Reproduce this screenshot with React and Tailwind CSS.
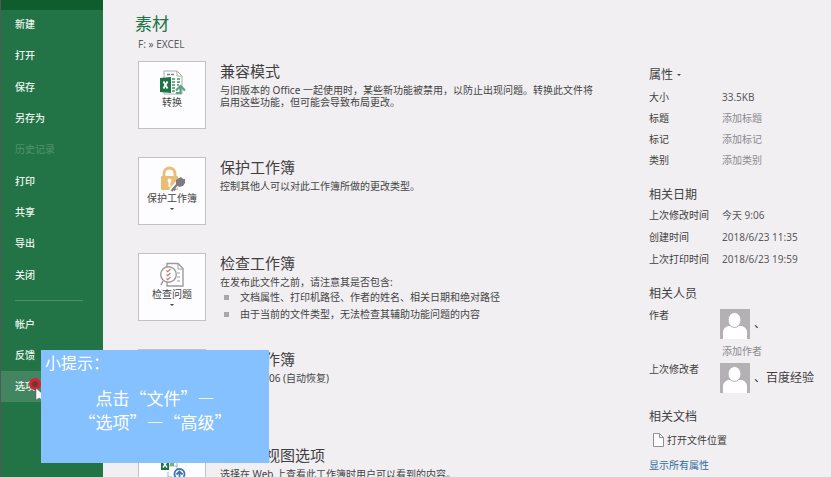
import React from 'react';

const menuItems = ['新建', '打开', '保存', '另存为', '历史记录', '打印', '共享', '导出', '关闭'];
const footerItems = ['帐户', '反馈', '选项'];

const ConvertIcon = () => (
  <svg className="w-[30px] h-[26px]" viewBox="0 0 30 26" fill="none" aria-hidden="true">
    <path d="M7 1h13l5 5v18H7z" fill="#fff" stroke="#a9aeac" />
    <path d="M20 1v5h5" stroke="#a9aeac" />
    <path d="M10 4.500h3M14 4.500h3" stroke="#7d8380" strokeWidth="1.400" />
    <path d="M15 9h3M20 9h3M15 12h3M20 12h3M15 15h3M20 15h2M15 18h3M15 21h3" stroke="#6fae8b" strokeWidth="2" />
    <path d="M3 8l11-1v16L3 22z" fill="#1e7446" />
    <path d="M6.500 11.500l4 7M10.500 11.500l-4 7" stroke="#fff" strokeWidth="1.800" />
    <path d="M20 24v-1h3.500v-6M19 20.500l4.500-4.500 4.500 4.500" stroke="#5d9f87" strokeWidth="2.200" />
  </svg>
);

const LockIcon = () => (
  <svg className="w-[30px] h-[26px]" viewBox="0 0 30 26" fill="none" aria-hidden="true">
    <path d="M7 12V7.500a5.500 5.500 0 0 1 11 0V12" stroke="#e9bd73" strokeWidth="2.800" />
    <rect x="4" y="10" width="17" height="14" rx="1" fill="#e9bd73" />
    <path d="M12.500 12.500a2 2 0 0 1 1 3.700V21h-2v-4.800a2 2 0 0 1 1-3.700z" fill="#fff" />
    <path d="M14 25l7-8" stroke="#fff" strokeWidth="5" />
    <path d="M14.500 25l7-8M17 23l1.500 1" stroke="#7d7b80" strokeWidth="2.200" />
    <path d="M19 14l3-2 2-1 2 2h2v4l-2 3-4 1-3-3z" fill="#7d7b80" />
  </svg>
);

const InspectIcon = () => (
  <svg className="w-[30px] h-[26px]" viewBox="0 0 30 26" fill="none" aria-hidden="true">
    <path d="M10 1.500h11l5 5V24H10z" fill="#fff" stroke="#9c9a9e" strokeWidth="1.400" />
    <path d="M21 2v5h5M20 11h3M20 15h3M20 19h3" stroke="#9c9a9e" />
    <circle cx="11.500" cy="12.500" r="7.800" fill="#fff" stroke="#9c9a9e" strokeWidth="1.400" />
    <path d="M6 19l-2 4" stroke="#9c9a9e" strokeWidth="1.600" />
    <path d="M9.500 8.500l1.200 1.200L13.500 7M9.500 12.500l1.200 1.200 2.800-2.700M9.500 16.500l1.200 1.200 2.800-2.700" stroke="#d9776b" strokeWidth="1.200" />
  </svg>
);

const VersionsIcon = () => (
  <svg className="w-[30px] h-[26px]" viewBox="0 0 30 26" fill="none" aria-hidden="true">
    <path d="M7 2h13l5 5v17H7z" fill="#fff" stroke="#a9aeac" />
    <circle cx="20" cy="18" r="5" fill="#fff" stroke="#7d7b80" />
    <path d="M20 15v3h3" stroke="#7d7b80" />
  </svg>
);

const BrowserIcon = () => (
  <svg className="w-[30px] h-[26px]" viewBox="0 0 30 26" fill="none" aria-hidden="true">
    <path d="M12 4h8v11M12 12h8M11 18v5h4" stroke="#9fb8ab" />
    <path d="M4 4h8v12H4z" fill="#1e7446" />
    <path d="M13 9h4v3h-4z" fill="#6fae8b" />
    <path d="M6 7.500l4 6M10 7.500l-4 6" stroke="#fff" strokeWidth="1.400" />
    <circle cx="22.500" cy="20" r="5" fill="#fff" stroke="#3c74b4" strokeWidth="1.800" />
    <path d="M22.500 25v-7M19.500 20.500l3-3 3 3" stroke="#3c74b4" strokeWidth="1.800" />
  </svg>
);

const Avatar = () => (
  <svg className="w-[30px] h-[30px] shrink-0" viewBox="0 0 30 30" aria-hidden="true">
    <rect width="30" height="30" fill="#b3b1b4" />
    <path d="M3 30v-6c0-4 2-6.500 6-7h12c4 .5 6 3 6 7v6z" fill="#fff" />
    <ellipse cx="14.500" cy="11" rx="6.500" ry="7.500" fill="#fff" stroke="#b3b1b4" />
  </svg>
);

const Caret = () => (
  <svg className="w-1 h-[2px]" viewBox="0 0 4 2" aria-hidden="true">
    <path d="M0 0h4L2 2z" fill="#444" />
  </svg>
);

const InfoRow = ({ icon, label, caret, title, children }) => (
  <section className="flex items-start gap-[14px]">
    <button className="flex flex-col items-center shrink-0 w-[68px] h-[68px] pt-2 bg-[#fdfcfe] border border-[#c3c1c4] text-[#444]">
      {icon}
      <span className="leading-3">{label}</span>
      {caret && <span className="mt-1"><Caret /></span>}
    </button>
    <div className="flex-1 max-w-[380px]">
      <h2 className="text-[15px] leading-5 text-[#3f3e40]">{title}</h2>
      {children}
    </div>
  </section>
);

const Field = ({ name, children }) => (
  <div className="flex items-center">
    <dt className="w-[73px]">{name}</dt>
    <dd className="text-[#5c5a5e]">{children}</dd>
  </div>
);

const Sidebar = () => (
  <nav className="w-[103px] shrink-0 bg-[#227447] border-l border-[#54585a] text-[#eef6f0] font-medium">
    <div className="h-[10px] bg-[#0f5c2d]"></div>
    <div className="grid grid-rows-9 h-[282px]">
      {menuItems.map((item) => (
        <button
          key={item}
          disabled={item === '历史记录'}
          className="pl-[14px] pb-[2px] text-left disabled:text-[#4b8e67]"
        >
          {item}
        </button>
      ))}
    </div>
    <hr className="mt-2 mb-2 ml-[14px] mr-5 border-[#4d9069]" />
    {footerItems.map((item) => (
      <button
        key={item}
        className={item === '选项' ? 'block w-full h-[31px] pl-[14px] text-left bg-[#438560]' : 'block w-full h-[31px] pl-[14px] text-left'}
      >
        {item}
      </button>
    ))}
  </nav>
);

const Properties = () => (
  <aside className="w-[182px] shrink-0 pt-[66px] text-[#3f3e40]">
    <h3 className="text-[12px] leading-[18px]">
      <button className="flex items-center gap-1">属性 <Caret /></button>
    </h3>
    <dl className="mt-[3px] leading-[21px]">
      <Field name="大小">33.5KB</Field>
      <Field name="标题"><button className="text-[#8c8a8e]">添加标题</button></Field>
      <Field name="标记"><button className="text-[#8c8a8e]">添加标记</button></Field>
      <Field name="类别"><button className="text-[#8c8a8e]">添加类别</button></Field>
    </dl>

    <h3 className="mt-[15px] text-[12px] leading-[18px]">相关日期</h3>
    <dl className="leading-[22px]">
      <Field name="上次修改时间">今天 9:06</Field>
      <Field name="创建时间">2018/6/23 11:35</Field>
      <Field name="上次打印时间">2018/6/23 19:59</Field>
    </dl>

    <h3 className="mt-[15px] text-[12px] leading-[18px]">相关人员</h3>
    <div className="flex mt-[6px]">
      <span className="w-[71px] leading-3">作者</span>
      <div>
        <div className="flex items-center gap-1"><Avatar /><span className="text-[12px]">、</span></div>
        <button className="block mt-[6px] ml-[2px] leading-3 text-[#8c8a8e]">添加作者</button>
      </div>
    </div>
    <div className="flex mt-[6px]">
      <span className="w-[71px] leading-3">上次修改者</span>
      <div className="flex items-center gap-1 text-[12px]"><Avatar /><span>、百度经验</span></div>
    </div>

    <h3 className="mt-[15px] text-[12px] leading-[18px]">相关文档</h3>
    <button className="flex items-center gap-[3px] mt-[5px] ml-1 leading-[18px]">
      <svg className="w-[11px] h-[14px]" viewBox="0 0 11 14" aria-hidden="true">
        <path d="M.5.5h6l4 4v9H.5zM6.500.5v4h4" fill="#fff" stroke="#929094" />
      </svg>
      打开文件位置
    </button>
    <a href="#properties" className="block mt-[7px] leading-[18px] text-[#2f6a9c]">显示所有属性</a>
  </aside>
);

const Tip = () => (
  <div className="absolute left-[41px] top-[350px] w-[228px] h-[113px] px-1 bg-[#85c0ff] text-white text-[17px] leading-6 font-['Noto_Sans_CJK_SC',sans-serif]">
    <p className="text-[16px]">小提示：</p>
    <p className="mt-3 text-center">点击“文件”—</p>
    <p className="text-center">“选项”—“高级”</p>
  </div>
);

const Pointer = () => (
  <svg className="absolute left-[28px] top-[376px] w-[16px] h-[26px]" viewBox="0 0 16 26" aria-hidden="true">
    <circle cx="7" cy="8" r="4.500" fill="#6d3a2c" stroke="#d81f35" strokeWidth="3" />
    <path d="M8 12l10 9v3h-4l-3-2-3 2z" fill="#fff" stroke="#555" strokeWidth=".5" />
  </svg>
);

const App = () => {
  return (
    <div
      lang="zh-CN"
      className="relative flex h-screen overflow-hidden bg-[#f1eff2] text-[10px] font-['Noto_Sans','Noto_Sans_CJK_SC',sans-serif]"
    >
      <Sidebar />
      <main className="flex-1 pt-3 pl-8">
        <h1 className="text-[17px] leading-6 text-[#227447]">素材</h1>
        <p className="pl-[3px] leading-4 text-[#5c5a5e]">F: » EXCEL</p>
        <div className="grid auto-rows-[68px] gap-7 mt-[9px] pl-[3px] leading-3 text-[#444]">
          <InfoRow icon={<ConvertIcon />} label="转换" title="兼容模式">
            <p className="pt-[3px]">与旧版本的 Office 一起使用时，某些新功能被禁用，以防止出现问题。转换此文件将启用这些功能，但可能会导致布局更改。</p>
          </InfoRow>
          <InfoRow icon={<LockIcon />} label="保护工作簿" caret title="保护工作簿">
            <p className="pt-[3px]">控制其他人可以对此工作簿所做的更改类型。</p>
          </InfoRow>
          <InfoRow icon={<InspectIcon />} label="检查问题" caret title="检查工作簿">
            <p className="pt-[3px]">在发布此文件之前，请注意其是否包含:</p>
            <ul className="pt-px pl-1 leading-[17px]">
              <li className="flex items-center gap-[11px]">
                <span className="w-[5px] h-[5px] bg-[#a9a7aa]"></span>
                文档属性、打印机路径、作者的姓名、相关日期和绝对路径
              </li>
              <li className="flex items-center gap-[11px]">
                <span className="w-[5px] h-[5px] bg-[#a9a7aa]"></span>
                由于当前的文件类型，无法检查其辅助功能问题的内容
              </li>
            </ul>
          </InfoRow>
          <InfoRow icon={<VersionsIcon />} label="管理工作簿" caret title="管理工作簿">
            <p className="pt-[3px] pl-[18px]">今天 9:06 (自动恢复)</p>
          </InfoRow>
          <InfoRow icon={<BrowserIcon />} label="浏览器视图选项" title="浏览器视图选项">
            <p className="pt-[3px]">选择在 Web 上查看此工作簿时用户可以看到的内容。</p>
          </InfoRow>
        </div>
      </main>
      <Properties />
      <Pointer />
      <Tip />
    </div>
  );
};

export default App;
